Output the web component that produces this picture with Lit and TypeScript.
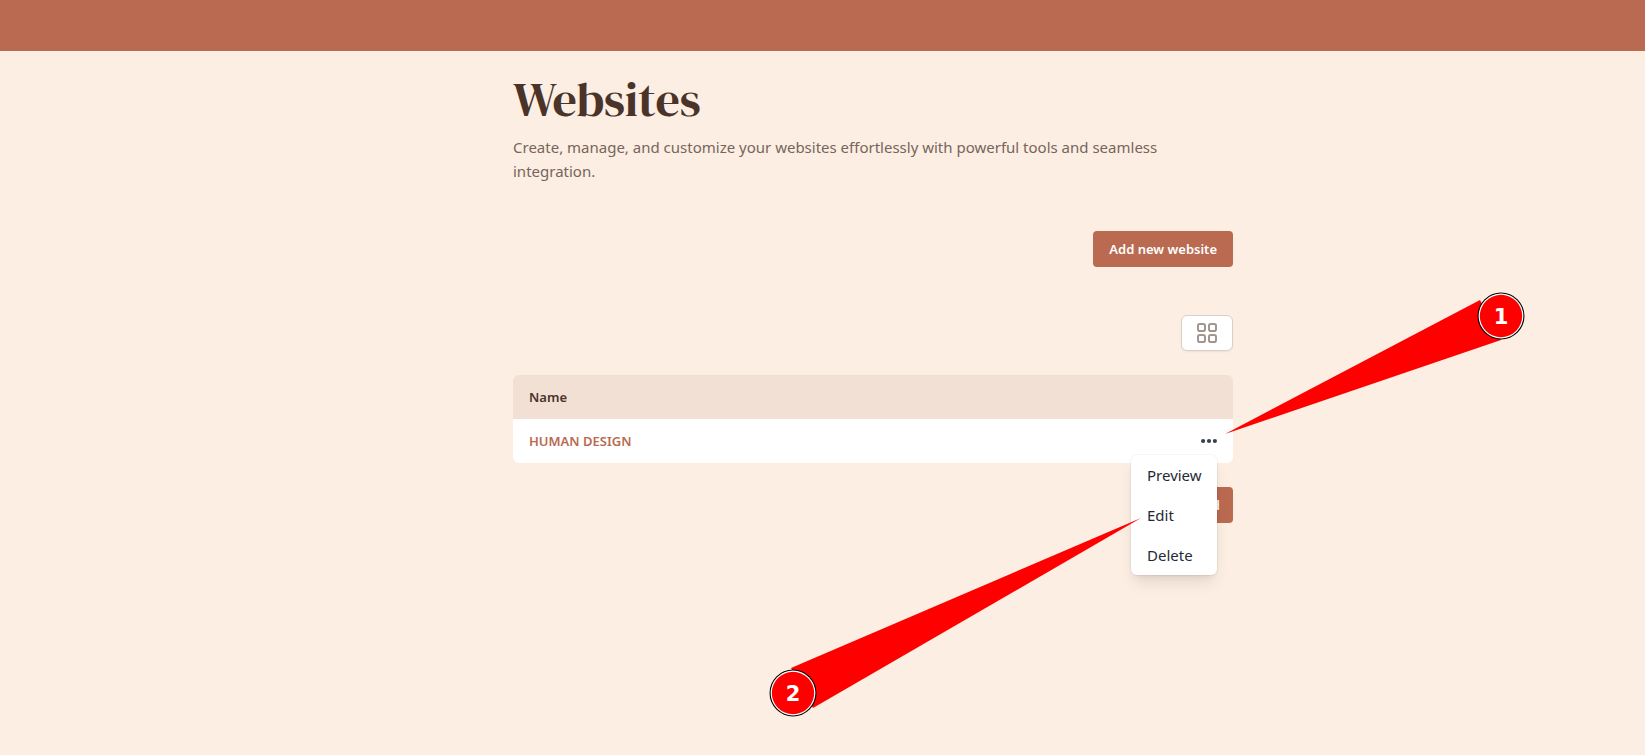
import { LitElement, html, css, svg } from "lit";
import { customElement } from "lit/decorators.js";

interface Callout {
  label: string;
  wedge: string;
  x: number;
  y: number;
}

const callouts: Callout[] = [
  { label: "1", wedge: "712,383 967,249 988,289", x: 988, y: 265 },
  { label: "2", wedge: "628,467 278,617 300,657", x: 280, y: 642 },
];

@customElement("app-root")
export class AppRoot extends LitElement {
  static styles = css`
    :host {
      display: block;
      box-sizing: border-box;
      min-height: 100vh;
      overflow: hidden;
      background: #fceee3;
      color: #4a342a;
      font-family: "Noto Sans", "Open Sans", sans-serif;
      font-size: 15px;
      line-height: 24px;
    }
    * {
      box-sizing: border-box;
    }
    .topbar {
      height: 51px;
      background: #ba6a50;
    }
    .page {
      padding-left: 101px;
    }
    .content {
      position: relative;
      max-width: 720px;
      margin: 0 auto;
      padding-top: 24px;
    }
    h1 {
      margin: 0;
      font-family: "DM Serif Display", "Liberation Serif", serif;
      font-size: 48px;
      line-height: 48px;
      font-weight: 400;
    }
    .intro {
      margin: 12px 0 0;
      color: #77655b;
    }
    .actions {
      display: flex;
      justify-content: flex-end;
      margin-top: 48px;
    }
    .primary {
      height: 36px;
      padding: 0 16px;
      border: 0;
      border-radius: 4px;
      background: #ba6a50;
      color: #fff;
      font: 600 13px/20px "Noto Sans", "Open Sans", sans-serif;
    }
    .view {
      display: grid;
      place-items: center;
      width: 52px;
      height: 36px;
      padding: 0;
      border: 1px solid #dccfc6;
      border-radius: 6px;
      background: #fff;
      box-shadow: 0 1px 2px rgb(0 0 0 / 6%);
    }
    table {
      width: 100%;
      margin-top: 24px;
      border-collapse: separate;
      border-spacing: 0;
      font-size: 13px;
      line-height: 20px;
    }
    th,
    td {
      height: 44px;
      padding: 0 16px;
      text-align: left;
      font-weight: 600;
    }
    th {
      background: #f2e0d4;
    }
    td {
      background: #fff;
    }
    th:first-child {
      border-top-left-radius: 6px;
    }
    th:last-child {
      border-top-right-radius: 6px;
    }
    td:first-child {
      border-bottom-left-radius: 6px;
    }
    td:last-child {
      border-bottom-right-radius: 6px;
    }
    .site {
      color: #ba6a50;
      text-decoration: none;
    }
    .tools {
      position: relative;
      width: 48px;
    }
    .more {
      display: block;
      width: 16px;
      height: 16px;
      padding: 0;
      border: 0;
      background: none;
    }
    .menu {
      position: absolute;
      z-index: 1;
      top: 36px;
      right: 16px;
      width: 86px;
      border-radius: 6px;
      background: #fff;
      box-shadow:
        0 0 0 1px rgb(0 0 0 / 4%),
        0 10px 15px -3px rgb(0 0 0 / 10%),
        0 4px 6px -4px rgb(0 0 0 / 10%);
    }
    .menu button {
      display: block;
      width: 100%;
      height: 40px;
      padding: 0 16px;
      border: 0;
      background: none;
      color: #1f2937;
      font: 400 15px/24px "Noto Sans", "Open Sans", sans-serif;
      text-align: left;
    }
    .footer {
      margin-top: 24px;
    }
    .footer .primary {
      padding: 0 13px;
    }
    svg {
      display: block;
    }
    .callouts {
      position: absolute;
      z-index: 2;
      top: 0;
      left: 0;
      width: 720px;
      height: 704px;
      overflow: visible;
      pointer-events: none;
    }
    .number {
      fill: #fff;
      font: 700 21px "DejaVu Sans", sans-serif;
      text-anchor: middle;
    }
  `;

  render() {
    return html`
      <header class="topbar"></header>
      <main class="page">
        <div class="content">
          <h1>Websites</h1>
          <p class="intro">
            Create, manage, and customize your websites effortlessly with
            powerful tools and seamless integration.
          </p>
          <div class="actions">
            <button class="primary">Add new website</button>
          </div>
          <div class="actions">
            <button class="view" aria-label="Grid view">
              <svg width="20" height="20" viewBox="0 0 20 20" fill="none" stroke="#a3968f" stroke-width="2">
                <rect x="1" y="1" width="7" height="7" rx="1.8" />
                <rect x="12" y="1" width="7" height="7" rx="1.8" />
                <rect x="1" y="12" width="7" height="7" rx="1.8" />
                <rect x="12" y="12" width="7" height="7" rx="1.8" />
              </svg>
            </button>
          </div>
          <table>
            <thead>
              <tr>
                <th scope="col">Name</th>
                <th class="tools"></th>
              </tr>
            </thead>
            <tbody>
              <tr>
                <td><a class="site" href="#">HUMAN DESIGN</a></td>
                <td class="tools">
                  <button class="more" aria-label="Actions">
                    <svg width="16" height="16" viewBox="0 0 16 16" fill="#374151">
                      <circle cx="2.1" cy="8" r="2.1" />
                      <circle cx="8" cy="8" r="2.1" />
                      <circle cx="13.9" cy="8" r="2.1" />
                    </svg>
                  </button>
                  <div class="menu">
                    <button>Preview</button>
                    <button>Edit</button>
                    <button>Delete</button>
                  </div>
                </td>
              </tr>
            </tbody>
          </table>
          <div class="actions footer">
            <button class="primary">Add</button>
          </div>
          <svg class="callouts" viewBox="0 0 720 704">
            ${callouts.map(
              (c) => svg`
                <polygon points=${c.wedge} fill="#f00" />
                <circle cx=${c.x} cy=${c.y} r="23.5" fill="#000" />
                <circle cx=${c.x} cy=${c.y} r="22.4" fill="#fff" />
                <circle cx=${c.x} cy=${c.y} r="21.2" fill="#f00" />
                <text class="number" x=${c.x} y=${c.y + 8}>${c.label}</text>
              `,
            )}
          </svg>
        </div>
      </main>
    `;
  }
}
